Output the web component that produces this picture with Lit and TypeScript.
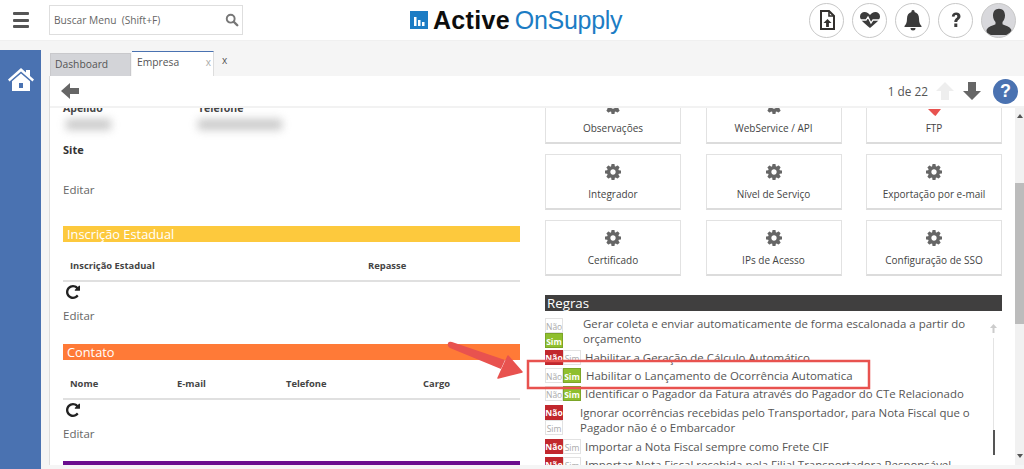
import { LitElement, html, css } from "lit";
import { customElement } from "lit/decorators.js";

const cogPath = "M1024 640q0 -106 -75 -181t-181 -75t-181 75t-75 181t75 181t181 75t181 -75t75 -181zM1536 749v-222q0 -12 -8 -23t-20 -13l-185 -28q-19 -54 -39 -91q35 -50 107 -138q10 -12 10 -25t-9 -23q-27 -37 -99 -108t-94 -71q-12 0 -26 9l-138 108q-44 -23 -91 -38q-16 -136 -29 -186q-7 -28 -36 -28h-222q-14 0 -24.5 8.5t-11.5 21.5l-28 184q-49 16 -90 37l-141 -107q-10 -9 -25 -9q-14 0 -25 11q-126 114 -165 168q-7 10 -7 23q0 12 8 23q15 21 51 66.5t54 70.5q-27 50 -41 99l-183 27q-13 2 -21 12.5t-8 23.5v222q0 12 8 23t19 13l186 28q14 46 39 92q-40 57 -107 138q-10 12 -10 24q0 10 9 23q26 36 98.5 107.5t94.5 71.5q13 0 26 -10l138 -107q44 23 91 38q16 136 29 186q7 28 36 28h222q14 0 24.5 -8.5t11.5 -21.5l28 -184q49 -16 90 -37l142 107q9 9 24 9q13 0 25 -10q129 -119 165 -170q7 -8 7 -22q0 -12 -8 -23q-15 -21 -51 -66.5t-54 -70.5q26 -50 41 -98l183 -28q13 -2 21 -12.5t8 -23.5z";
const repeatPath = "M1536 1280v-448q0-26-19-45t-45-19h-448q-42 0-59 40-17 39 14 69l138 138q-148 137-349 137-104 0-198.5-40.5t-163.5-109.5-109.5-163.5-40.5-198.5 40.5-198.5 109.5-163.5 163.5-109.5 198.5-40.5q119 0 225 52t179 147q7 10 23 12 14 0 25-9l137-138q9-8 9.5-20.5t-7.5-22.5q-109-132-264-204.5t-327-72.5q-156 0-298 61t-245 164-164 245-61 298 61 298 164 245 245 164 298 61q147 0 284.5-55.5t244.5-156.5l130 129q29 31 70 14 39-17 39-59z";

const faIcon = (d: string, cls: string) => html`<svg class=${cls} viewBox="0 -128 1536 1536"><path transform="matrix(1 0 0 -1 0 1280)" d=${d} fill="currentColor" fill-rule="evenodd"></path></svg>`;

type Tile = { label: string; ftp?: boolean };
const tiles1: Tile[] = [{ label: "Observações" }, { label: "WebService / API" }, { label: "FTP", ftp: true }];
const tiles2: Tile[] = [{ label: "Integrador" }, { label: "Nível de Serviço" }, { label: "Exportação por e-mail" }];
const tiles3: Tile[] = [{ label: "Certificado" }, { label: "IPs de Acesso" }, { label: "Configuração de SSO" }];

type Rule = { on: boolean; stack: boolean; text: string; gap: number; h: number };
const rules: Rule[] = [
  { on: true, stack: true, text: "Gerar coleta e enviar automaticamente de forma escalonada a partir do orçamento", gap: 20, h: 32 },
  { on: false, stack: false, text: "Habilitar a Geração de Cálculo Automático", gap: 4, h: 18 },
  { on: true, stack: false, text: "Habilitar o Lançamento de Ocorrência Automatica", gap: 5, h: 18 },
  { on: true, stack: false, text: "Identificar o Pagador da Fatura através do Pagador do CTe Relacionado", gap: 4, h: 19 },
  { on: false, stack: true, text: "Ignorar ocorrências recebidas pelo Transportador, para Nota Fiscal que o Pagador não é o Embarcador", gap: 17, h: 34 },
  { on: false, stack: false, text: "Importar a Nota Fiscal sempre como Frete CIF", gap: 4, h: 18 },
  { on: false, stack: false, text: "Importar Nota Fiscal recebida pela Filial Transportadora Responsável", gap: 4, h: 18 },
];

@customElement("app-root")
export class AppRoot extends LitElement {
  static styles = css`
    :host { display: block; position: relative; height: 469px; overflow: hidden; background: #f5f5f5; font-family: "Open Sans", "Liberation Sans", sans-serif; color: #444; }
    header { height: 41px; background: #fff; display: flex; align-items: center; padding-left: 13px; border-bottom: 1px solid #f0f0f0; box-sizing: border-box; }
    .burger { width: 16px; display: flex; flex-direction: column; gap: 3.5px; }
    .burger i { display: block; height: 3px; background: #555; border-radius: 1px; }
    .search { margin-left: 20px; width: 194px; height: 30px; box-sizing: border-box; border: 1px solid #dedede; display: flex; align-items: center; justify-content: space-between; padding: 0 3px 0 4px; font-size: 10.2px; color: #666; margin-top: -1px; }
    .search svg { width: 14px; height: 14px; color: #777; }
    .logo { position: absolute; left: 410px; top: 8px; display: flex; align-items: center; white-space: nowrap; font-family: "Liberation Sans", sans-serif; font-size: 25px; height: 24px; }
    .logo svg { width: 18px; height: 18px; margin-right: 5px; }
    .logo b { color: #0d0d0d; letter-spacing: 0.3px; margin-right: 5px; }
    .logo span { color: #1c7cc4; letter-spacing: -0.3px; }
    .actions { margin-left: auto; display: flex; gap: 8px; padding-right: 8px; }
    .circle { width: 35px; height: 35px; box-sizing: border-box; border-radius: 50%; border: 1px solid #c8c8c8; background: #fff; display: flex; align-items: center; justify-content: center; }
    .circle.user { background: #d8d8dc; overflow: hidden; }
    .circle svg { width: 24px; height: 24px; }
    .circle.user svg { width: 30px; height: 30px; }
    main { display: flex; height: 428px; }
    aside { width: 41px; margin-top: 9px; background: #4a72b1; display: flex; justify-content: center; padding-top: 15px; box-sizing: border-box; }
    aside svg { width: 28px; height: 28px; }
    .panel { margin-left: 9px; flex: 1; min-width: 0; display: flex; flex-direction: column; height: 424px; }
    .tabs { height: 35px; display: flex; align-items: flex-end; font-size: 10.3px; }
    .tab { width: 81px; box-sizing: border-box; height: 23px; background: #d3d4d8; border: 1px solid #c9c9cc; border-bottom: 0; padding: 3px 4px; color: #555; }
    .tab.active { width: 82px; height: 25px; background: #fff; border: 0; border-top: 1px solid #4a72b1; border-right: 1px solid #ddd; display: flex; justify-content: space-between; padding: 3px 2px 0 5px; margin-left: 1px; }
    .tab.active em { font-style: normal; color: #aaa; font-size: 10px; }
    .tabx { font-size: 10px; align-self: flex-start; margin: 12px 0 0 8px; color: #555; }
    .toolbar { height: 30px; background: #fff; display: flex; align-items: center; padding: 0 6px 0 11px; border-bottom: 2px solid #f2f2f2; box-shadow: -1px 0 0 #ddd; font-size: 11.8px; color: #555; }
    .toolbar .pager { margin-left: auto; margin-right: 8px; }
    .toolbar svg { width: 18px; height: 18px; display: block; }
    .toolbar .up { margin-right: 9px; }
    .toolbar .down { margin-right: 12px; }
    .help { width: 25px; height: 25px; border-radius: 50%; background: #4a72b1; color: #fff; font: bold 18px/25px "Liberation Sans", sans-serif; text-align: center; }
    .view { flex: 1; display: flex; min-height: 0; background: #fff; box-shadow: -1px 0 0 #ddd; position: relative; }
    .clip { flex: 1; overflow: hidden; min-width: 0; padding-left: 13px; }
    .grid { display: grid; grid-template-columns: 457px 457px; column-gap: 25px; margin-top: -7px; }
    .left, .right { min-width: 0; }
    .cap { font-weight: 700; font-size: 10.5px; color: #444; display: flex; }
    .cap.first { height: 14px; align-items: flex-end; line-height: 14px; }
    .cap.first span:first-child { width: 135px; }
    .blur { display: flex; height: 18px; padding: 4px 0 0 3px; box-sizing: border-box; }
    .blur i { display: block; height: 11px; background: #bdbdbd; filter: blur(4px); opacity: .8; }
    .blur .b1 { width: 45px; }
    .blur .b2 { width: 84px; margin-left: 87px; }
    .site { font-weight: 700; font-size: 11px; margin-top: 9px; line-height: 16px; color: #333; }
    .edit { font-size: 11.5px; color: #666; line-height: 16px; }
    .edit.top { margin-top: 24px; }
    .bar { height: 16px; line-height: 16px; color: #fff; font-size: 12.8px; padding-left: 4px; }
    .yellow { background: #fdc93d; margin-top: 28px; }
    .orange { background: #ff7a37; margin-top: 20px; }
    .purple { background: #6a0f8e; height: 16px; margin-top: 19px; }
    .thead { display: flex; font-size: 9.4px; font-weight: 700; height: 40px; align-items: flex-end; box-sizing: border-box; padding: 0 0 8px 7px; border-bottom: 2px solid #e0e0e0; line-height: 13px; color: #444; }
    .refresh { display: block; width: 14px; height: 14px; margin: 3px 0 0 3px; color: #222; }
    .edit.after { margin-top: 9px; }
    .tiles { display: grid; grid-template-columns: repeat(3, 136px); column-gap: 24.5px; row-gap: 10px; margin-top: -13px; }
    .tile { height: 56px; box-sizing: border-box; background: #fff; border: 1px solid #e2e2e2; border-bottom: 2px solid #dcdcdc; display: flex; flex-direction: column; align-items: center; padding-top: 9px; font-size: 10px; color: #444; }
    .tile svg { width: 16px; height: 16px; color: #666; margin-bottom: 7px; display: block; overflow: visible; }
    .regras { background: #403f3f; height: 16px; line-height: 16px; color: #fff; font-size: 13.3px; padding-left: 2px; margin-top: 19px; }
    .rules { margin-top: 7px; position: relative; height: 160px; }
    .rule { display: flex; font-size: 11.45px; color: #555; line-height: 15px; width: 433px; }
    .rule p { margin: 0; }
    .rule.tight p { line-height: 14.5px; margin-top: -1px; }
    .tog { display: flex; flex: none; font-size: 8.5px; line-height: 15px; text-align: center; font-family: "Open Sans", sans-serif; }
    .tog.stack { flex-direction: column; width: 18px; }
    .tog span { width: 18px; height: 15px; box-sizing: border-box; display: block; overflow: hidden; }
    .no { background: #fff; color: #aaa; border: 1px solid #e2e2e2; }
    .nao-on { background: #c1272d; color: #fff; font-weight: 700; }
    .sim-on { background: #8fbf2e; color: #fff; font-weight: 700; border: 1px solid #7ba528; }
    .mini { position: absolute; left: 447px; top: 6px; width: 3px; height: 135px; display: flex; flex-direction: column; align-items: center; }
    .mini svg { width: 9px; height: 9px; flex: none; margin-bottom: 5px; }
    .mini .track { width: 1px; height: 92px; background: #e4e4e4; flex: none; }
    .mini .thumb { width: 2px; height: 25px; background: #555; flex: none; }
    .sb { width: 9px; flex: none; background: #f1f1f1; margin-left: 2px; position: relative; }
    .sb .thumb { position: absolute; top: 75px; left: 0; right: 0; height: 141px; background: #bcbcbc; }
    .sb .a { position: absolute; left: 2px; width: 0; height: 0; border: 3px solid transparent; }
    .sb .a.t { top: 6px; border-bottom: 4px solid #555; border-top: 0; }
    .sb .a.b { bottom: 7px; border-top: 4px solid #555; border-bottom: 0; }
    .over { position: absolute; left: 0; top: 0; width: 1024px; height: 469px; pointer-events: none; }
  `;

  private tile(t: Tile) {
    return html`<div class="tile">
      ${t.ftp
        ? html`<svg viewBox="0 0 16 16"><path d="M2 11H15L9.500 18 8 17Z" fill="#e8524f"></path></svg>`
        : faIcon(cogPath, "")}
      <span>${t.label}</span>
    </div>`;
  }

  private toggle(r: Rule) {
    return html`<div class="tog ${r.stack ? "stack" : ""}">
      <span class=${r.on ? "no" : "nao-on"}>Não</span>
      <span class=${r.on ? "sim-on" : "no"}>Sim</span>
    </div>`;
  }

  render() {
    return html`
      <header>
        <div class="burger"><i></i><i></i><i></i></div>
        <div class="search"><span>Buscar Menu&nbsp; (Shift+F)</span>
          <svg viewBox="0 0 16 16"><circle cx="6.5" cy="6.5" r="4.5" fill="none" stroke="currentColor" stroke-width="2.2"></circle><path d="M10 10l4 4" stroke="currentColor" stroke-width="2.8" stroke-linecap="round"></path></svg>
        </div>
        <div class="logo">
          <svg viewBox="0 0 18 18"><rect width="18" height="18" fill="#1c7cc4"></rect><rect x="4" y="6" width="2.5" height="9" fill="#fff"></rect><rect x="8" y="9" width="2.5" height="6" fill="#fff"></rect><rect x="12" y="11" width="2.5" height="4" fill="#fff"></rect></svg>
          <b>Active</b><span>OnSupply</span>
        </div>
        <div class="actions">
          <div class="circle"><svg viewBox="0 0 24 24"><path d="M6 3h8l5 5v13H6z" fill="none" stroke="#33302e" stroke-width="2"></path><path d="M14 3v5h5" fill="none" stroke="#33302e" stroke-width="1.6"></path><path d="M12.500 11l4 4h-2.600v4h-2.800v-4H8.500z" fill="#33302e"></path></svg></div>
          <div class="circle"><svg viewBox="0 0 24 24"><path d="M12 20C6 15 2 12 2 8.500 2 5.500 4.300 4 6.500 4 9 4 11 5.500 12 7c1-1.500 3-3 5.500-3C19.700 4 22 5.500 22 8.500 22 12 18 15 12 20z" fill="#3b3b3b"></path><path d="M1 12h7l2-3 3 6 2-3h8" fill="none" stroke="#fff" stroke-width="1.300"></path></svg></div>
          <div class="circle"><svg viewBox="0 0 24 24"><path d="M12 2a1.500 1.500 0 0 1 1.500 2c3 .8 4.500 3.200 4.500 6.500 0 4 1 6 2.500 7.500v1h-17v-1C5 16.500 6 14.500 6 10.500 6 7.200 7.500 4.800 10.500 4A1.500 1.500 0 0 1 12 2z" fill="#3b3b3b"></path><path d="M9.500 20a2.500 2.500 0 0 0 5 0z" fill="#3b3b3b"></path></svg></div>
          <div class="circle"><svg viewBox="0 0 24 24"><path d="M7.800 8.500C8 5.700 9.800 4.500 12.200 4.500c2.600 0 4.300 1.500 4.300 3.700 0 3.300-3.200 3.200-3.200 5.800h-3c0-3.500 3-3.700 3-5.500 0-.9-.5-1.400-1.300-1.400-.9 0-1.400.6-1.500 1.700zM10.300 15.500h3V19h-3z" fill="#3b3b3b"></path></svg></div>
          <div class="circle user"><svg viewBox="0 0 24 24"><path d="M12 3c3 0 4.800 2.200 4.800 5.300 0 2.300-.9 4-2 5.200v1.800c2 1 6.200 1.800 7.200 4.700v4H2v-4c1-2.900 5.200-3.700 7.200-4.700v-1.800c-1.100-1.200-2-2.900-2-5.200C7.200 5.200 9 3 12 3z" fill="#3d3d3d"></path></svg></div>
        </div>
      </header>
      <main>
        <aside>
          <svg viewBox="0 0 28 28"><path d="M14 3L1 14.500l1.500 2L14 6.500l11.500 10 1.500-2-4-3.500V5h-4v2.500z" fill="#fff"></path><path d="M14 8.500L5 16.300V26h18v-9.700zM12 18h4v5h-4z" fill="#fff" fill-rule="evenodd"></path></svg>
        </aside>
        <div class="panel">
          <div class="tabs">
            <div class="tab">Dashboard</div>
            <div class="tab active"><span>Empresa</span><em>x</em></div>
            <div class="tabx">x</div>
          </div>
          <div class="toolbar">
            <svg viewBox="0 0 18 18"><path d="M0 9L9 1v5h9v6H9v5z" fill="#666"></path></svg>
            <span class="pager">1 de 22</span>
            <svg class="up" viewBox="0 0 18 18"><path d="M9 0l9 9h-5v9H5V9H0z" fill="#eee"></path></svg>
            <svg class="down" viewBox="0 0 18 18"><path d="M9 18l9-9h-5V0H5v9H0z" fill="#666"></path></svg>
            <div class="help">?</div>
          </div>
          <div class="view">
            <div class="clip">
              <div class="grid">
                <div class="left">
                  <div class="cap first"><span>Apelido</span><span>Telefone</span></div>
                  <div class="blur"><i class="b1"></i><i class="b2"></i></div>
                  <div class="site">Site</div>
                  <div class="edit top">Editar</div>
                  <div class="bar yellow">Inscrição Estadual</div>
                  <div class="thead"><span style="width:298px">Inscrição Estadual</span><span>Repasse</span></div>
                  ${faIcon(repeatPath, "refresh")}
                  <div class="edit after">Editar</div>
                  <div class="bar orange">Contato</div>
                  <div class="thead"><span style="width:107px">Nome</span><span style="width:109px">E-mail</span><span style="width:137px">Telefone</span><span>Cargo</span></div>
                  ${faIcon(repeatPath, "refresh")}
                  <div class="edit after">Editar</div>
                  <div class="purple"></div>
                </div>
                <div class="right">
                  <div class="tiles">
                    ${[...tiles1, ...tiles2, ...tiles3].map((t) => this.tile(t))}
                  </div>
                  <div class="regras">Regras</div>
                  <div class="rules">
                    ${rules.map((r, i) => html`<div class="rule ${i === 0 ? "tight" : ""}" style="height:${r.h}px">
                      ${this.toggle(r)}<p style="margin-left:${r.gap}px">${r.text}</p>
                    </div>`)}
                    <div class="mini">
                      <svg viewBox="0 0 9 9"><path d="M4.500 0L8 4H5.500v5h-2V4H1z" fill="#ccc"></path></svg>
                      <div class="track"></div><div class="thumb"></div>
                    </div>
                  </div>
                </div>
              </div>
            </div>
            <div class="sb"><div class="thumb"></div><div class="a t"></div><div class="a b"></div></div>
          </div>
        </div>
      </main>
      <svg class="over" viewBox="0 0 1024 469">
        <rect x="528" y="361" width="341" height="27" fill="none" stroke="#e8524f" stroke-width="2.500"></rect>
        <path d="M448 343Q447 346 450 348L501 369L505 360L452 342Q449 341 448 343Z" fill="#e8524f"></path>
        <path d="M508 356L522 372L498 378Z" fill="#e8524f" stroke="#e8524f" stroke-width="1.500" stroke-linejoin="round"></path>
      </svg>
    `;
  }
}
